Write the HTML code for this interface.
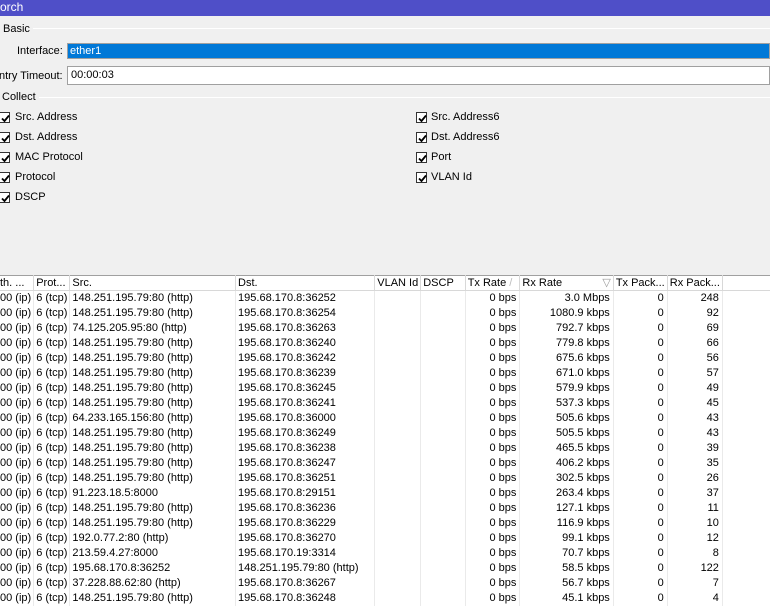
<!DOCTYPE html>
<html><head><meta charset="utf-8"><style>
*{margin:0;padding:0;box-sizing:border-box}
body{width:770px;height:601px;overflow:hidden;background:#f0f0f0;font-family:"Liberation Sans",Arial,sans-serif;font-size:11px;color:#000;position:relative}
.a{position:absolute;white-space:nowrap}
.title{left:0;top:0;width:770px;height:16px;background:#4f4fc8;color:#fff;font-size:12px;line-height:15px;padding-left:0}
.gl{position:absolute;height:1px;background:#a8a8a8;border-bottom:1px solid #fff}
.inp{position:absolute;left:67px;width:703px;border:1px solid #a0a0a0}
.cb{position:absolute;width:11px;height:11px;border:1px solid #333;background:#fff}
.cb svg{position:absolute;left:1px;top:1px}
table{position:absolute;left:0;top:275px;border-collapse:collapse;table-layout:fixed;background:#fff}
td,th{height:15px;line-height:14px;padding:0 2px;overflow:hidden;white-space:nowrap;font-weight:normal;text-align:left}
th{background:#fff;border-right:1px solid #d8d8d8;border-bottom:1px solid #d8d8d8;border-top:1px solid #a0a0a0}
td{border-right:1px solid #eaeaea}
td.r{text-align:right;padding-right:3px}
</style></head><body>
<div class="a title">orch</div>
<div class="a" style="left:3px;top:23px">Basic</div>
<div class="gl" style="left:33px;top:28px;width:737px"></div>
<div class="a" style="left:17px;top:45px">Interface:</div>
<div class="inp" style="top:43px;height:16px;background:#0078d7;color:#fff;line-height:14px;padding-left:2px">ether1</div>
<div class="a" style="left:-1px;top:70px">ntry Timeout:</div>
<div class="inp" style="top:66px;height:19px;background:#fff;line-height:17px;padding-left:3px">00:00:03</div>
<div class="a" style="left:2px;top:91px">Collect</div>
<div class="gl" style="left:39px;top:97px;width:731px"></div>

<div class="cb" style="left:-1px;top:112px"><svg width="9" height="9"><path d="M1 4.5 L3.5 7 L8 1.5" stroke="#000" stroke-width="1.8" fill="none"/></svg></div>
<div class="a" style="left:15px;top:111px">Src. Address</div>
<div class="cb" style="left:-1px;top:132px"><svg width="9" height="9"><path d="M1 4.5 L3.5 7 L8 1.5" stroke="#000" stroke-width="1.8" fill="none"/></svg></div>
<div class="a" style="left:15px;top:131px">Dst. Address</div>
<div class="cb" style="left:-1px;top:152px"><svg width="9" height="9"><path d="M1 4.5 L3.5 7 L8 1.5" stroke="#000" stroke-width="1.8" fill="none"/></svg></div>
<div class="a" style="left:15px;top:151px">MAC Protocol</div>
<div class="cb" style="left:-1px;top:172px"><svg width="9" height="9"><path d="M1 4.5 L3.5 7 L8 1.5" stroke="#000" stroke-width="1.8" fill="none"/></svg></div>
<div class="a" style="left:15px;top:171px">Protocol</div>
<div class="cb" style="left:-1px;top:192px"><svg width="9" height="9"><path d="M1 4.5 L3.5 7 L8 1.5" stroke="#000" stroke-width="1.8" fill="none"/></svg></div>
<div class="a" style="left:15px;top:191px">DSCP</div>

<div class="cb" style="left:416px;top:112px"><svg width="9" height="9"><path d="M1 4.5 L3.5 7 L8 1.5" stroke="#000" stroke-width="1.8" fill="none"/></svg></div>
<div class="a" style="left:431px;top:111px">Src. Address6</div>
<div class="cb" style="left:416px;top:132px"><svg width="9" height="9"><path d="M1 4.5 L3.5 7 L8 1.5" stroke="#000" stroke-width="1.8" fill="none"/></svg></div>
<div class="a" style="left:431px;top:131px">Dst. Address6</div>
<div class="cb" style="left:416px;top:152px"><svg width="9" height="9"><path d="M1 4.5 L3.5 7 L8 1.5" stroke="#000" stroke-width="1.8" fill="none"/></svg></div>
<div class="a" style="left:431px;top:151px">Port</div>
<div class="cb" style="left:416px;top:172px"><svg width="9" height="9"><path d="M1 4.5 L3.5 7 L8 1.5" stroke="#000" stroke-width="1.8" fill="none"/></svg></div>
<div class="a" style="left:431px;top:171px">VLAN Id</div>

<table>
<colgroup><col style="width:30px"><col style="width:35px"><col style="width:168px"><col style="width:140px"><col style="width:45px"><col style="width:45px"><col style="width:55px"><col style="width:95px"><col style="width:54px"><col style="width:55px"><col style="width:50px"></colgroup>
<tr><th style="padding-left:0">th. ...</th><th>Prot...</th><th>Src.</th><th>Dst.</th><th>VLAN Id</th><th>DSCP</th><th>Tx Rate <span style="color:#bbb">/</span></th><th>Rx Rate<span style="float:right;color:#999">▽</span></th><th>Tx Pack...</th><th>Rx Pack...</th><th style="border-right:none"></th></tr>
<tr><td style="padding-left:0">00 (ip)</td><td>6 (tcp)</td><td>148.251.195.79:80 (http)</td><td>195.68.170.8:36252</td><td></td><td></td><td class="r">0 bps</td><td class="r">3.0 Mbps</td><td class="r">0</td><td class="r">248</td><td style="border:none"></td></tr>
<tr><td style="padding-left:0">00 (ip)</td><td>6 (tcp)</td><td>148.251.195.79:80 (http)</td><td>195.68.170.8:36254</td><td></td><td></td><td class="r">0 bps</td><td class="r">1080.9 kbps</td><td class="r">0</td><td class="r">92</td><td style="border:none"></td></tr>
<tr><td style="padding-left:0">00 (ip)</td><td>6 (tcp)</td><td>74.125.205.95:80 (http)</td><td>195.68.170.8:36263</td><td></td><td></td><td class="r">0 bps</td><td class="r">792.7 kbps</td><td class="r">0</td><td class="r">69</td><td style="border:none"></td></tr>
<tr><td style="padding-left:0">00 (ip)</td><td>6 (tcp)</td><td>148.251.195.79:80 (http)</td><td>195.68.170.8:36240</td><td></td><td></td><td class="r">0 bps</td><td class="r">779.8 kbps</td><td class="r">0</td><td class="r">66</td><td style="border:none"></td></tr>
<tr><td style="padding-left:0">00 (ip)</td><td>6 (tcp)</td><td>148.251.195.79:80 (http)</td><td>195.68.170.8:36242</td><td></td><td></td><td class="r">0 bps</td><td class="r">675.6 kbps</td><td class="r">0</td><td class="r">56</td><td style="border:none"></td></tr>
<tr><td style="padding-left:0">00 (ip)</td><td>6 (tcp)</td><td>148.251.195.79:80 (http)</td><td>195.68.170.8:36239</td><td></td><td></td><td class="r">0 bps</td><td class="r">671.0 kbps</td><td class="r">0</td><td class="r">57</td><td style="border:none"></td></tr>
<tr><td style="padding-left:0">00 (ip)</td><td>6 (tcp)</td><td>148.251.195.79:80 (http)</td><td>195.68.170.8:36245</td><td></td><td></td><td class="r">0 bps</td><td class="r">579.9 kbps</td><td class="r">0</td><td class="r">49</td><td style="border:none"></td></tr>
<tr><td style="padding-left:0">00 (ip)</td><td>6 (tcp)</td><td>148.251.195.79:80 (http)</td><td>195.68.170.8:36241</td><td></td><td></td><td class="r">0 bps</td><td class="r">537.3 kbps</td><td class="r">0</td><td class="r">45</td><td style="border:none"></td></tr>
<tr><td style="padding-left:0">00 (ip)</td><td>6 (tcp)</td><td>64.233.165.156:80 (http)</td><td>195.68.170.8:36000</td><td></td><td></td><td class="r">0 bps</td><td class="r">505.6 kbps</td><td class="r">0</td><td class="r">43</td><td style="border:none"></td></tr>
<tr><td style="padding-left:0">00 (ip)</td><td>6 (tcp)</td><td>148.251.195.79:80 (http)</td><td>195.68.170.8:36249</td><td></td><td></td><td class="r">0 bps</td><td class="r">505.5 kbps</td><td class="r">0</td><td class="r">43</td><td style="border:none"></td></tr>
<tr><td style="padding-left:0">00 (ip)</td><td>6 (tcp)</td><td>148.251.195.79:80 (http)</td><td>195.68.170.8:36238</td><td></td><td></td><td class="r">0 bps</td><td class="r">465.5 kbps</td><td class="r">0</td><td class="r">39</td><td style="border:none"></td></tr>
<tr><td style="padding-left:0">00 (ip)</td><td>6 (tcp)</td><td>148.251.195.79:80 (http)</td><td>195.68.170.8:36247</td><td></td><td></td><td class="r">0 bps</td><td class="r">406.2 kbps</td><td class="r">0</td><td class="r">35</td><td style="border:none"></td></tr>
<tr><td style="padding-left:0">00 (ip)</td><td>6 (tcp)</td><td>148.251.195.79:80 (http)</td><td>195.68.170.8:36251</td><td></td><td></td><td class="r">0 bps</td><td class="r">302.5 kbps</td><td class="r">0</td><td class="r">26</td><td style="border:none"></td></tr>
<tr><td style="padding-left:0">00 (ip)</td><td>6 (tcp)</td><td>91.223.18.5:8000</td><td>195.68.170.8:29151</td><td></td><td></td><td class="r">0 bps</td><td class="r">263.4 kbps</td><td class="r">0</td><td class="r">37</td><td style="border:none"></td></tr>
<tr><td style="padding-left:0">00 (ip)</td><td>6 (tcp)</td><td>148.251.195.79:80 (http)</td><td>195.68.170.8:36236</td><td></td><td></td><td class="r">0 bps</td><td class="r">127.1 kbps</td><td class="r">0</td><td class="r">11</td><td style="border:none"></td></tr>
<tr><td style="padding-left:0">00 (ip)</td><td>6 (tcp)</td><td>148.251.195.79:80 (http)</td><td>195.68.170.8:36229</td><td></td><td></td><td class="r">0 bps</td><td class="r">116.9 kbps</td><td class="r">0</td><td class="r">10</td><td style="border:none"></td></tr>
<tr><td style="padding-left:0">00 (ip)</td><td>6 (tcp)</td><td>192.0.77.2:80 (http)</td><td>195.68.170.8:36270</td><td></td><td></td><td class="r">0 bps</td><td class="r">99.1 kbps</td><td class="r">0</td><td class="r">12</td><td style="border:none"></td></tr>
<tr><td style="padding-left:0">00 (ip)</td><td>6 (tcp)</td><td>213.59.4.27:8000</td><td>195.68.170.19:3314</td><td></td><td></td><td class="r">0 bps</td><td class="r">70.7 kbps</td><td class="r">0</td><td class="r">8</td><td style="border:none"></td></tr>
<tr><td style="padding-left:0">00 (ip)</td><td>6 (tcp)</td><td>195.68.170.8:36252</td><td>148.251.195.79:80 (http)</td><td></td><td></td><td class="r">0 bps</td><td class="r">58.5 kbps</td><td class="r">0</td><td class="r">122</td><td style="border:none"></td></tr>
<tr><td style="padding-left:0">00 (ip)</td><td>6 (tcp)</td><td>37.228.88.62:80 (http)</td><td>195.68.170.8:36267</td><td></td><td></td><td class="r">0 bps</td><td class="r">56.7 kbps</td><td class="r">0</td><td class="r">7</td><td style="border:none"></td></tr>
<tr><td style="padding-left:0">00 (ip)</td><td>6 (tcp)</td><td>148.251.195.79:80 (http)</td><td>195.68.170.8:36248</td><td></td><td></td><td class="r">0 bps</td><td class="r">45.1 kbps</td><td class="r">0</td><td class="r">4</td><td style="border:none"></td></tr>
</table>
</body></html>
